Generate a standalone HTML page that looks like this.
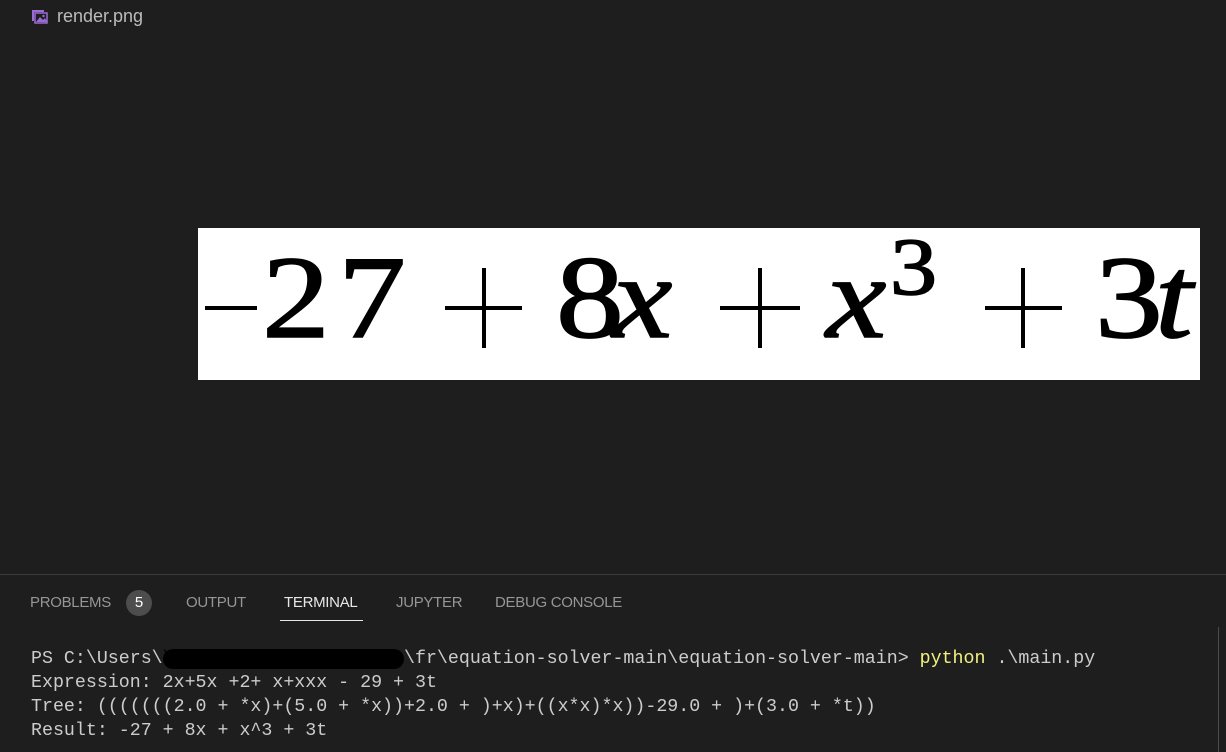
<!DOCTYPE html>
<html><head><meta charset="utf-8"><style>
body{margin:0;width:1226px;height:752px;background:#1e1e1e;position:relative;overflow:hidden;font-family:"Liberation Sans",sans-serif}
.abs{position:absolute}
.g{position:absolute;font-family:"Liberation Serif",serif;font-size:118px;line-height:118px;color:#000;top:239px;transform-origin:0 0;transform:scaleX(1.15);-webkit-text-stroke:1.5px #000}
.i{font-style:italic}
.tab{position:absolute;top:594px;font-size:15px;color:#969696;letter-spacing:-0.3px}
.term{position:absolute;left:31px;font-family:"Liberation Mono",monospace;font-size:18.3px;color:#cccccc;white-space:pre;line-height:24px}
.h{position:absolute;background:#000;height:4px}
.v{position:absolute;background:#000;width:4px}
</style></head><body>
<svg class="abs" style="left:31px;top:9px" width="17" height="15" viewBox="0 0 17 15"><path d="M1 1h12v2H3v9H1z" fill="#9b6bd6"/><rect x="4" y="4" width="12" height="10" fill="none" stroke="#9b6bd6" stroke-width="1.5"/><path d="M5 13l4-5 3 3 2-2 2 4z" fill="#9b6bd6"/><circle cx="12.5" cy="7" r="1.2" fill="#9b6bd6"/></svg>
<div class="abs" style="left:57px;top:6px;font-size:18px;color:#bbbbbb">render.png</div>

<div class="abs" style="left:198px;top:228px;width:1002px;height:152px;background:#fff"></div>
<div class="h" style="left:205px;width:52px;top:306px"></div>
<span class="g" style="left:262px">2</span>
<span class="g" style="left:338px">7</span>
<div class="h" style="left:445px;width:77px;top:306px"></div><div class="v" style="left:482px;height:80px;top:268px"></div>
<span class="g" style="left:556px">8</span><span class="g i" style="left:612px">x</span>
<div class="h" style="left:720px;width:80px;top:306px"></div><div class="v" style="left:758px;height:80px;top:268px"></div>
<span class="g i" style="left:826px">x</span>
<span class="g" style="left:890px;font-size:82px;line-height:82px;top:226px">3</span>
<div class="h" style="left:985px;width:77px;top:306px"></div><div class="v" style="left:1021px;height:80px;top:268px"></div>
<span class="g" style="left:1095px">3</span><span class="g i" style="left:1155px">t</span>

<div class="abs" style="left:0;top:574px;width:1226px;height:1px;background:#3c3c3c"></div>
<div class="tab" style="left:30px">PROBLEMS</div>
<div class="abs" style="left:126px;top:590px;width:26px;height:26px;border-radius:13px;background:#4d4d4d;color:#fff;font-size:15px;text-align:center;line-height:26px">5</div>
<div class="tab" style="left:186px">OUTPUT</div>
<div class="tab" style="left:284px;color:#e7e7e7">TERMINAL</div>
<div class="abs" style="left:280px;top:620px;width:83px;height:1px;background:#e7e7e7"></div>
<div class="tab" style="left:396px">JUPYTER</div>
<div class="tab" style="left:495px">DEBUG CONSOLE</div>
<div class="abs" style="left:1218px;top:627px;width:1px;height:125px;background:#4a4a4a"></div>

<div class="term" style="top:647px">PS C:\Users\<span style="background:#000;color:#000;border-radius:10px">\\\\\\\\\\\\\\\\\\\\\\</span>\fr\equation-solver-main\equation-solver-main&gt; <span style="color:#f1f181">python</span> .\main.py</div>
<div class="term" style="top:671px">Expression: 2x+5x +2+ x+xxx - 29 + 3t</div>
<div class="term" style="top:695px">Tree: (((((((2.0 + *x)+(5.0 + *x))+2.0 + )+x)+((x*x)*x))-29.0 + )+(3.0 + *t))</div>
<div class="term" style="top:719px">Result: -27 + 8x + x^3 + 3t</div>
</body></html>
